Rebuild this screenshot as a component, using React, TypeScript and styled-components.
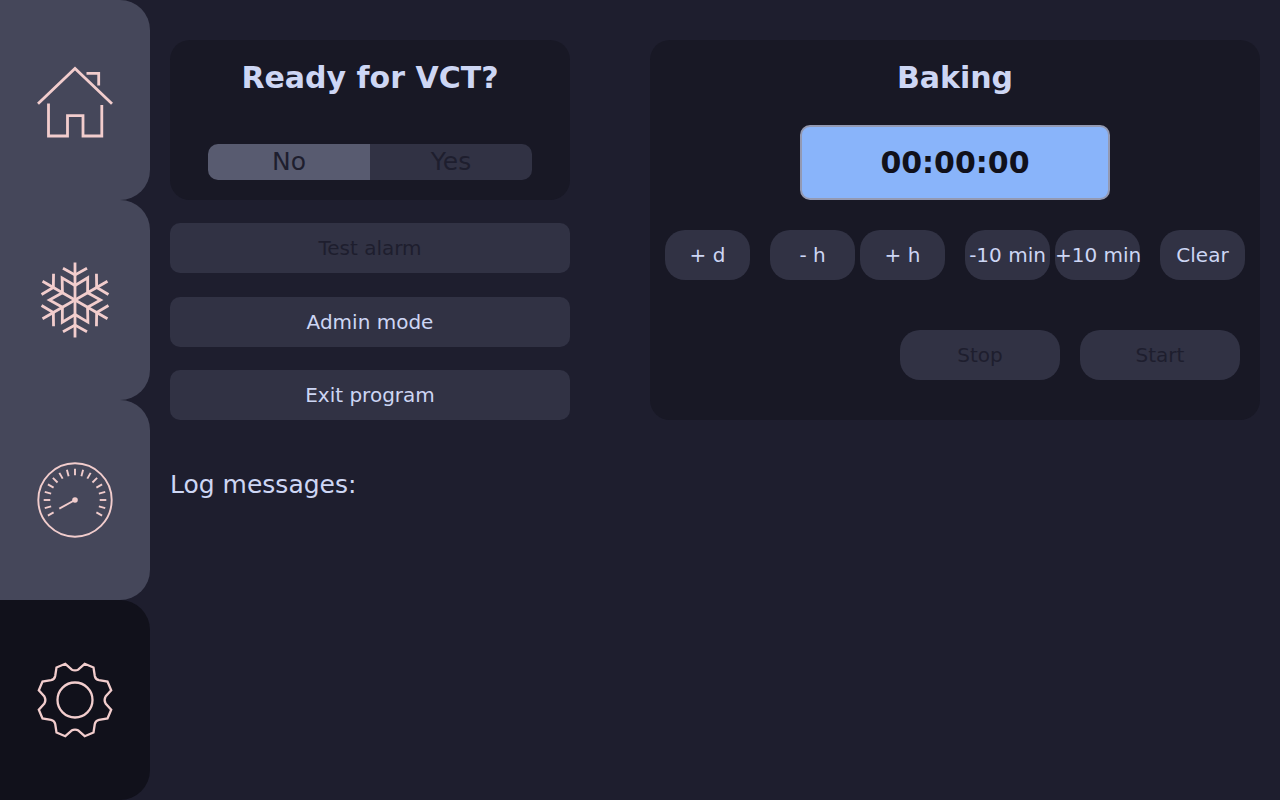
import { ReactNode, useState } from "react";
import styled, { createGlobalStyle } from "styled-components";

const colors = {
  base: "#1e1e2e",
  mantle: "#181825",
  crust: "#11111b",
  surface0: "#313244",
  surface1: "#45475a",
  surface2: "#585b70",
  overlay: "#9399b2",
  text: "#cdd6f4",
  blue: "#89b4fa",
  flamingo: "#f2cdcd",
};

const HomeIcon = () => (
  <Icon viewBox="0 0 90 90" strokeWidth={2.8}>
    <path d="M8 48.7 45 13.5 82 48.7" />
    <path d="M56.5 18.3H68.7V30.5" />
    <path d="M18.5 48.5V81H37.5V60.7H53V81H71.8V50" />
  </Icon>
);

const SnowflakeIcon = () => (
  <Icon viewBox="0 0 90 90" strokeWidth={2.8} strokeLinecap="butt">
    {[0, 60, 120, 180, 240, 300].map((angle) => (
      <g key={angle} transform={`rotate(${angle} 45 45)`}>
        <path d="M45 45V7.5" />
        <path d="M33 13.3 45 20 57 13.3" />
        <path d="M45 30.5 57.7 22.8 57.6 37.7" />
      </g>
    ))}
  </Icon>
);

const GaugeIcon = () => (
  <Icon viewBox="0 0 90 90" strokeWidth={1.9}>
    <circle cx="45" cy="45" r="36.7" />
    {Array.from({ length: 17 }, (_, i) => (i - 8) * 15).map((angle) => (
      <path key={angle} d="M45 13.7V20.3" transform={`rotate(${angle} 45 45)`} />
    ))}
    <path d="M45 45 29.3 53.7" />
    <circle cx="45" cy="45" r="2.8" fill={colors.flamingo} stroke="none" />
  </Icon>
);

const GearIcon = () => (
  <Icon viewBox="0 0 90 90" strokeWidth={2.3}>
    <circle cx="45" cy="45" r="17.5" />
    <path d="M35.3 8.8 41.5 14.4Q45 16.4 48.5 14.4L54.7 8.8 63.5 12.5 64.8 21Q65.5 24.5 69 25.2L77.5 26.5 81.2 35.3 75.6 41.5Q73.6 45 75.6 48.5L81.2 54.7 77.5 63.5 69 64.8Q65.5 65.5 64.8 69L63.5 77.5 54.7 81.2 48.5 75.6Q45 73.6 41.5 75.6L35.3 81.2 26.5 77.5 25.2 69Q24.5 65.5 21 64.8L12.5 63.5 8.8 54.7 14.4 48.5Q16.4 45 14.4 41.5L8.8 35.3 12.5 26.5 21 25.2Q24.5 24.5 25.2 21L26.5 12.5Z" />
  </Icon>
);

const tabs: { name: string; icon: ReactNode }[] = [
  { name: "home", icon: <HomeIcon /> },
  { name: "cooling", icon: <SnowflakeIcon /> },
  { name: "pressure", icon: <GaugeIcon /> },
  { name: "settings", icon: <GearIcon /> },
];

const timeButtons = [["+ d"], ["- h", "+ h"], ["-10 min", "+10 min"], ["Clear"]];

const App = () => {
  const [tab, setTab] = useState("settings");

  return (
    <Page>
      <GlobalStyle />
      <Sidebar>
        {tabs.map(({ name, icon }) => (
          <Tab key={name} $active={name === tab} onClick={() => setTab(name)}>
            {icon}
          </Tab>
        ))}
      </Sidebar>
      <Main>
        <Columns>
          <Controls>
            <ReadyCard>
              <Title>Ready for VCT?</Title>
              <Toggle>
                <ToggleOption $selected>No</ToggleOption>
                <ToggleOption>Yes</ToggleOption>
              </Toggle>
            </ReadyCard>
            <WideButton disabled>Test alarm</WideButton>
            <WideButton>Admin mode</WideButton>
            <WideButton>Exit program</WideButton>
          </Controls>
          <BakingCard>
            <Title>Baking</Title>
            <Timer>00:00:00</Timer>
            <TimeRow>
              {timeButtons.map((group) => (
                <TimeGroup key={group[0]}>
                  {group.map((label) => (
                    <RoundButton key={label} $width={85}>
                      {label}
                    </RoundButton>
                  ))}
                </TimeGroup>
              ))}
            </TimeRow>
            <ActionRow>
              <RoundButton $width={160} disabled>
                Stop
              </RoundButton>
              <RoundButton $width={160} disabled>
                Start
              </RoundButton>
            </ActionRow>
          </BakingCard>
        </Columns>
        <LogTitle>Log messages:</LogTitle>
      </Main>
    </Page>
  );
};

const GlobalStyle = createGlobalStyle`
  * {
    box-sizing: border-box;
  }
  body {
    margin: 0;
    background-color: ${colors.base};
    color: ${colors.text};
    font-family: "DejaVu Sans", sans-serif;
  }
`;

const Page = styled.div`
  display: flex;
  width: 1280px;
  height: 800px;
  overflow: hidden;
`;

const Sidebar = styled.nav`
  display: flex;
  flex-direction: column;
  width: 150px;
`;

const Tab = styled.button<{ $active: boolean }>`
  display: flex;
  flex: 1;
  align-items: center;
  justify-content: center;
  padding: 0;
  border: none;
  border-radius: 0 30px 30px 0;
  background-color: ${({ $active }) => ($active ? colors.crust : colors.surface1)};
`;

const Icon = styled.svg`
  width: 90px;
  height: 90px;
  fill: none;
  stroke: ${colors.flamingo};
`;

const Main = styled.main`
  flex: 1;
  padding: 40px 20px;
`;

const Columns = styled.div`
  display: flex;
  justify-content: space-between;
  height: 380px;
`;

const Controls = styled.div`
  display: flex;
  flex-direction: column;
  justify-content: space-between;
  width: 400px;
`;

const Card = styled.section`
  display: flex;
  flex-direction: column;
  align-items: center;
  border-radius: 20px;
  background-color: ${colors.mantle};
`;

const ReadyCard = styled(Card)`
  justify-content: space-between;
  height: 160px;
  padding: 20px 0;
`;

const BakingCard = styled(Card)`
  width: 610px;
  padding: 20px 15px;
`;

const Title = styled.h2`
  margin: 0;
  font-size: 30px;
  line-height: 35px;
`;

const Toggle = styled.div`
  display: flex;
  width: 324px;
  height: 36px;
  overflow: hidden;
  border-radius: 10px;
`;

const ToggleOption = styled.div<{ $selected?: boolean }>`
  flex: 1;
  background-color: ${({ $selected }) =>
    $selected ? colors.surface2 : colors.surface0};
  color: ${colors.base};
  font-size: 25px;
  line-height: 36px;
  text-align: center;
`;

const Button = styled.button`
  height: 50px;
  padding: 0;
  border: none;
  background-color: ${colors.surface0};
  color: ${colors.text};
  font-family: inherit;
  font-size: 20px;
  white-space: nowrap;
  :disabled,
  &:disabled {
    color: ${colors.base};
  }
`;

const WideButton = styled(Button)`
  border-radius: 10px;
`;

const RoundButton = styled(Button)<{ $width: number }>`
  width: ${({ $width }) => $width}px;
  border-radius: 20px;
`;

const Timer = styled.div`
  width: 310px;
  height: 75px;
  margin-top: 30px;
  border: 2px solid ${colors.overlay};
  border-radius: 10px;
  background-color: ${colors.blue};
  color: ${colors.crust};
  font-size: 30px;
  font-weight: bold;
  line-height: 71px;
  text-align: center;
`;

const TimeRow = styled.div`
  display: flex;
  gap: 20px;
  margin-top: 30px;
`;

const TimeGroup = styled.div`
  display: flex;
  gap: 5px;
`;

const ActionRow = styled.div`
  display: flex;
  align-self: flex-end;
  gap: 20px;
  margin: 50px 5px 0 0;
`;

const LogTitle = styled.div`
  margin-top: 50px;
  font-size: 25px;
  line-height: 30px;
`;

export default App;
